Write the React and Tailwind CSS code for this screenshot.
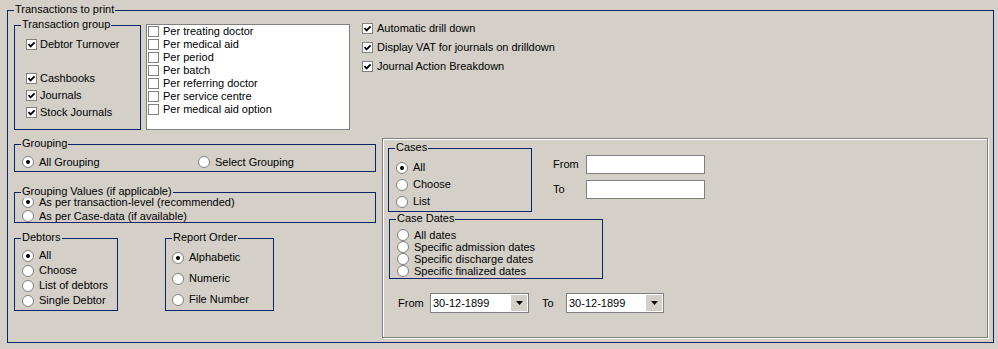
import React from 'react'

const Check = ({ on }) => (
  <span className="w-[11px] h-[11px] shrink-0 border border-[#808080] bg-white flex items-center justify-center">
    {on && (
      <svg width="9" height="9" viewBox="0 0 9 9">
        <path d="M1.5 4.2 L3.6 6.4 L7.6 2.3" fill="none" stroke="#000" strokeWidth="1.8" />
      </svg>
    )}
  </span>
)

const Radio = ({ on }) => (
  <span className="w-[12px] h-[12px] shrink-0 rounded-full border border-[#808080] bg-white flex items-center justify-center">
    {on && <span className="w-[4px] h-[4px] rounded-full bg-black" />}
  </span>
)

const Group = ({ title, className = '', children }) => (
  <div className={`relative border border-[#0a246a] ${className}`}>
    <span className="absolute -top-[8px] left-[6px] px-[1px] bg-[#d4d0c8] leading-[13px] whitespace-nowrap">
      {title}
    </span>
    {children}
  </div>
)

const CheckRow = ({ label, on, h = 'h-[17px]', gap = 'ml-[3px]' }) => (
  <div className={`flex items-center ${h}`}>
    <Check on={on} />
    <span className={`${gap} whitespace-nowrap`}>{label}</span>
  </div>
)

const RadioRow = ({ label, on, h = 'h-[15px]', className = '' }) => (
  <div className={`flex items-center ${h} ${className}`}>
    <Radio on={on} />
    <span className="ml-[5px] whitespace-nowrap">{label}</span>
  </div>
)

const DateBox = ({ w }) => (
  <div className={`${w} h-[20px] border border-[#808080] bg-white flex items-center`}>
    <span className="flex-1 pl-[2px]">30-12-1899</span>
    <span className="w-[16px] h-[16px] mr-[1px] bg-[#d4d0c8] flex items-center justify-center">
      <svg width="7" height="4" viewBox="0 0 7 4">
        <path d="M0 0H7L3.5 4Z" fill="#000" />
      </svg>
    </span>
  </div>
)

export default function App() {
  return (
    <div className="w-[998px] h-[349px] bg-[#d4d0c8] pt-[10px] pl-[7px] text-[11px] leading-[13px] text-black font-['Liberation_Sans',Arial,sans-serif] overflow-hidden">
      <Group title="Transactions to print" className="w-[987px] h-[333px]">
        {/* top row */}
        <div className="flex items-start pl-[6px] pt-[7px]">
          <Group title="Transaction group" className="w-[127px] h-[105px] mt-[7px] pl-[11px] pt-[10px]">
            <CheckRow label="Debtor Turnover" on />
            <div className="h-[17px]" />
            <CheckRow label="Cashbooks" on />
            <CheckRow label="Journals" on />
            <CheckRow label="Stock Journals" on />
          </Group>
          <div className="w-[204px] h-[106px] mt-[6px] ml-[5px] border border-[#808080] bg-white pl-[1px]">
            {['Per treating doctor', 'Per medical aid', 'Per period', 'Per batch', 'Per referring doctor', 'Per service centre', 'Per medical aid option'].map((t) => (
              <CheckRow key={t} label={t} h="h-[13px]" gap="ml-[4px]" />
            ))}
          </div>
          <div className="ml-[12px] pt-[1px]">
            <CheckRow label="Automatic drill down" on h="h-[19px]" gap="ml-[4px]" />
            <CheckRow label="Display VAT for journals on drilldown" on h="h-[19px]" gap="ml-[4px]" />
            <CheckRow label="Journal Action Breakdown" on h="h-[19px]" gap="ml-[4px]" />
          </div>
        </div>

        {/* bottom row */}
        <div className="flex items-start pl-[6px]">
          <div className="w-[362px] mt-[14px] flex flex-col">
            <Group title="Grouping" className="h-[28px] pl-[7px] pt-[9px] flex">
              <RadioRow label="All Grouping" on h="h-[16px]" className="w-[176px]" />
              <RadioRow label="Select Grouping" h="h-[16px]" />
            </Group>
            <Group title="Grouping Values (if applicable)" className="h-[31px] mt-[20px] pl-[7px] pt-[2px]">
              <RadioRow label="As per transaction-level (recommended)" on h="h-[14px]" />
              <RadioRow label="As per Case-data (if available)" h="h-[14px]" />
            </Group>
            <div className="flex mt-[15px]">
              <Group title="Debtors" className="w-[104px] h-[73px] pl-[7px] pt-[9px]">
                <RadioRow label="All" on />
                <RadioRow label="Choose" />
                <RadioRow label="List of debtors" />
                <RadioRow label="Single Debtor" />
              </Group>
              <Group title="Report Order" className="w-[109px] h-[73px] ml-[47px] pl-[6px] pt-[8px]">
                <RadioRow label="Alphabetic" on h="h-[21px]" />
                <RadioRow label="Numeric" h="h-[21px]" />
                <RadioRow label="File Number" h="h-[21px]" />
              </Group>
            </div>
          </div>

          <div className="w-[606px] h-[200px] ml-[6px] mt-[8px] border border-[#808080] shadow-[inset_1px_1px_0_#fff,1px_1px_0_#fff] pl-[5px] pt-[9px]">
            <div className="flex items-start">
              <Group title="Cases" className="w-[144px] h-[64px] pl-[7px] pt-[10px]">
                <RadioRow label="All" on h="h-[17px]" />
                <RadioRow label="Choose" h="h-[17px]" />
                <RadioRow label="List" h="h-[17px]" />
              </Group>
              <div className="ml-[21px] mt-[7px] flex flex-col gap-[6px]">
                <div className="flex items-center h-[19px]">
                  <span className="w-[33px]">From</span>
                  <div className="w-[119px] h-[19px] border border-[#808080] bg-white" />
                </div>
                <div className="flex items-center h-[19px]">
                  <span className="w-[33px]">To</span>
                  <div className="w-[119px] h-[19px] border border-[#808080] bg-white" />
                </div>
              </div>
            </div>
            <Group title="Case Dates" className="w-[214px] h-[60px] ml-[1px] mt-[7px] pl-[7px] pt-[9px]">
              <RadioRow label="All dates" h="h-[12px]" />
              <RadioRow label="Specific admission dates" h="h-[12px]" />
              <RadioRow label="Specific discharge dates" h="h-[12px]" />
              <RadioRow label="Specific finalized dates" h="h-[12px]" />
            </Group>
            <div className="flex items-center mt-[14px] pl-[10px]">
              <span className="w-[32px]">From</span>
              <DateBox w="w-[99px]" />
              <span className="ml-[13px] w-[24px]">To</span>
              <DateBox w="w-[98px]" />
            </div>
          </div>
        </div>
      </Group>
    </div>
  )
}
